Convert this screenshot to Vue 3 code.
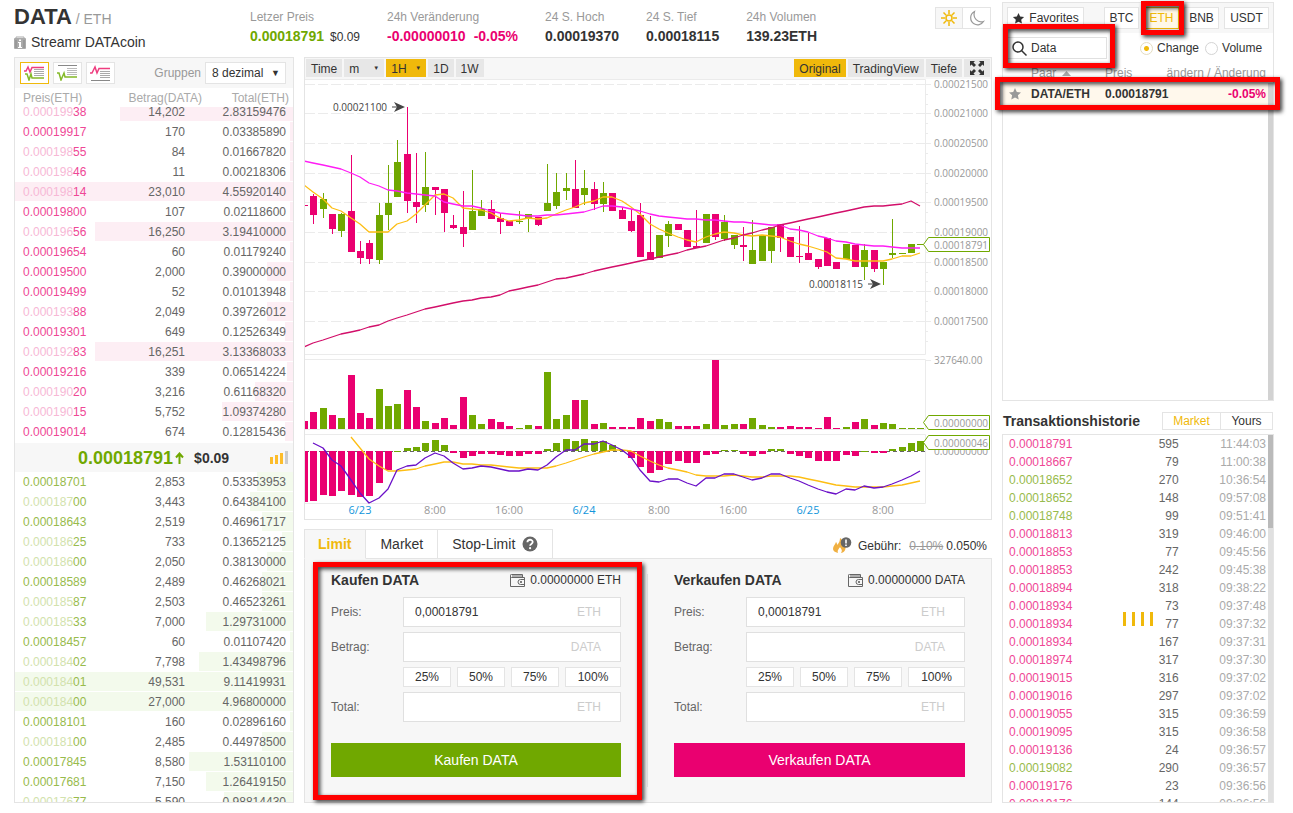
<script setup>
import { ref } from 'vue'

const search = ref('Data')
const sortBy = ref('change')

const stats = [
  { label: 'Letzer Preis', value: '0.00018791', tone: 'up', extra: '$0.09' },
  { label: '24h Veränderung', value: '-0.00000010', tone: 'down', second: '-0.05%' },
  { label: '24 S. Hoch', value: '0.00019370' },
  { label: '24 S. Tief', value: '0.00018115' },
  { label: '24h Volumen', value: '139.23ETH' },
]

// [price, amount, total, depth in px of a 278px row, faded prefix]
const book = (rows) =>
  rows.map(([price, amount, total, depth, faded]) => ({
    head: faded ? price.slice(0, 8) : '',
    tail: faded ? price.slice(8) : price,
    amount,
    total,
    depth: ((depth / 278) * 100).toFixed(2) + '%',
  }))

const asks = book([
  ['0.00019938', '14,202', '2.83159476', 173, 1],
  ['0.00019917', '170', '0.03385890', 3, 0],
  ['0.00019855', '84', '0.01667820', 3, 1],
  ['0.00019846', '11', '0.00218306', 3, 1],
  ['0.00019814', '23,010', '4.55920140', 278, 1],
  ['0.00019800', '107', '0.02118600', 3, 0],
  ['0.00019656', '16,250', '3.19410000', 198, 1],
  ['0.00019654', '60', '0.01179240', 3, 0],
  ['0.00019500', '2,000', '0.39000000', 26, 0],
  ['0.00019499', '52', '0.01013948', 3, 0],
  ['0.00019388', '2,049', '0.39726012', 26, 1],
  ['0.00019301', '649', '0.12526349', 8, 0],
  ['0.00019283', '16,251', '3.13368033', 198, 1],
  ['0.00019216', '339', '0.06514224', 6, 0],
  ['0.00019020', '3,216', '0.61168320', 38, 1],
  ['0.00019015', '5,752', '1.09374280', 71, 1],
  ['0.00019014', '674', '0.12815436', 8, 0],
])

const bids = book([
  ['0.00018701', '2,853', '0.53353953', 36, 0],
  ['0.00018700', '3,443', '0.64384100', 43, 1],
  ['0.00018643', '2,519', '0.46961717', 31, 0],
  ['0.00018625', '733', '0.13652125', 11, 1],
  ['0.00018600', '2,050', '0.38130000', 26, 1],
  ['0.00018589', '2,489', '0.46268021', 31, 0],
  ['0.00018587', '2,503', '0.46523261', 31, 1],
  ['0.00018533', '7,000', '1.29731000', 87, 1],
  ['0.00018457', '60', '0.01107420', 3, 0],
  ['0.00018402', '7,798', '1.43498796', 94, 1],
  ['0.00018401', '49,531', '9.11419931', 278, 1],
  ['0.00018400', '27,000', '4.96800000', 278, 1],
  ['0.00018101', '160', '0.02896160', 3, 0],
  ['0.00018100', '2,485', '0.44978500', 31, 1],
  ['0.00017845', '8,580', '1.53110100', 104, 0],
  ['0.00017681', '7,150', '1.26419150', 87, 0],
  ['0.00017677', '5,590', '0.98814430', 69, 1],
])

const history = [
  ['0.00018791', '595', '11:44:03', 'down'],
  ['0.00018667', '79', '11:00:38', 'down'],
  ['0.00018652', '270', '10:36:54', 'up'],
  ['0.00018652', '148', '09:57:08', 'up'],
  ['0.00018748', '99', '09:51:41', 'up'],
  ['0.00018813', '319', '09:46:00', 'down'],
  ['0.00018853', '77', '09:45:56', 'down'],
  ['0.00018853', '242', '09:45:38', 'down'],
  ['0.00018894', '318', '09:38:22', 'down'],
  ['0.00018934', '73', '09:37:48', 'down'],
  ['0.00018934', '77', '09:37:32', 'down'],
  ['0.00018934', '167', '09:37:31', 'down'],
  ['0.00018974', '317', '09:37:30', 'down'],
  ['0.00019015', '316', '09:37:02', 'down'],
  ['0.00019016', '297', '09:37:02', 'down'],
  ['0.00019055', '315', '09:36:59', 'down'],
  ['0.00019095', '315', '09:36:58', 'down'],
  ['0.00019136', '24', '09:36:57', 'down'],
  ['0.00019082', '290', '09:36:57', 'up'],
  ['0.00019176', '23', '09:36:56', 'down'],
  ['0.00019176', '144', '09:36:56', 'down'],
]

const forms = [
  { side: 'buy', title: 'Kaufen DATA', balance: '0.00000000 ETH', price: ref('0,00018791') },
  { side: 'sell', title: 'Verkaufen DATA', balance: '0.00000000 DATA', price: ref('0,00018791') },
]
const shares = ['25%', '50%', '75%', '100%']

// Chart series are kept in steps of a third of a chart unit, counted downwards.
const RED = '#ea0070'
const GREEN = '#70a800'
const centerX = (i) => Math.round(9.34 * i - 1)
const priceY = (t) => Math.round(t / 3) - 29
const lowerY = (t) => Math.round(t / 3) + 271

// [high, low, body top, body bottom, rising]
const candles = [
  [449, 488, 465, 468, 0], [433, 521, 438, 494, 0], [430, 505, 447, 476, 1], [492, 551, 492, 537, 0],
  [490, 560, 492, 542, 1], [316, 606, 483, 606, 0], [574, 641, 603, 624, 0], [571, 643, 579, 627, 0],
  [458, 643, 495, 629, 1], [346, 541, 459, 494, 1], [270, 441, 336, 441, 1], [172, 490, 312, 453, 0],
  [310, 518, 456, 471, 0], [307, 487, 411, 465, 1], [411, 494, 411, 420, 0], [417, 545, 417, 489, 0],
  [496, 536, 525, 534, 0], [424, 592, 531, 552, 0], [361, 540, 483, 540, 1], [450, 498, 477, 498, 1],
  [450, 508, 477, 507, 0], [490, 551, 504, 516, 0], [514, 528, 514, 528, 0], [484, 521, 513, 516, 1],
  [492, 545, 492, 504, 1], [500, 527, 500, 524, 0], [343, 483, 459, 483, 1], [370, 478, 426, 468, 1],
  [370, 449, 414, 423, 1], [331, 474, 417, 474, 0], [361, 464, 414, 435, 1], [396, 479, 417, 462, 0],
  [397, 485, 429, 462, 1], [429, 483, 429, 483, 0], [470, 508, 480, 507, 0], [478, 545, 513, 543, 0],
  [460, 621, 495, 621, 0], [498, 630, 606, 630, 0], [555, 624, 555, 624, 1], [513, 591, 522, 557, 1],
  [522, 540, 522, 540, 0], [540, 591, 540, 591, 0], [480, 595, 588, 594, 0], [492, 580, 492, 579, 1],
  [492, 570, 492, 561, 0], [495, 572, 516, 567, 1], [555, 597, 555, 585, 1], [531, 632, 585, 591, 0],
  [510, 642, 600, 642, 1], [555, 633, 555, 633, 1], [531, 639, 531, 603, 1], [522, 605, 522, 564, 0],
  [561, 621, 561, 621, 0], [528, 638, 618, 621, 0], [548, 630, 609, 630, 0], [627, 656, 627, 651, 0],
  [564, 648, 564, 648, 0], [636, 657, 636, 657, 0], [582, 627, 582, 627, 1], [585, 651, 585, 651, 0],
  [582, 690, 600, 651, 1], [600, 665, 600, 657, 0], [636, 704, 636, 657, 1], [508, 625, 609, 615, 1],
  [609, 612, 609, 612, 1], [582, 609, 582, 609, 1], [582, 585, 582, 585, 1],
].map(([high, low, top, bottom, rising], i) => ({
  x: centerX(i),
  high: priceY(high),
  wick: priceY(low) - priceY(high),
  top: priceY(top),
  body: Math.max(1, priceY(bottom) - priceY(top)),
  color: rising ? GREEN : RED,
}))

const volumes = [
  213, 186, 174, 195, 204, 75, 189, 204, 117, 168, 162, 120, 171, 213, 219, 204, 225, 141, 195, 222, 207, 216,
  228, 234, 225, 228, 66, 207, 195, 150, 150, 222, 219, 231, 231, 231, 204, 213, 207, 216, 228, 228, 228, 222,
  30, 225, 222, 222, 204, 225, 231, 231, 228, 231, 231, 234, 201, 234, 231, 216, 207, 225, 219, 222, 234, 234, 234,
].map((t, i) => ({ x: centerX(i), y: lowerY(t), h: 350 - lowerY(t), color: candles[i].color }))

const macdBars = [
  456, 453, 435, 438, 423, 435, 441, 438, 399, 360, 302, 294, 291, 279, 270, 285, 308, 324, 318, 312, 312, 315,
  318, 318, 312, 312, 297, 279, 267, 273, 267, 273, 273, 285, 300, 324, 351, 369, 360, 342, 333, 339, 339, 315,
  312, 300, 300, 312, 318, 312, 297, 297, 312, 318, 324, 333, 333, 333, 315, 318, 302, 308, 308, 297, 291, 279, 273,
].map((t, i) => {
  const end = lowerY(t)
  return { x: centerX(i), y: Math.min(end, 372), h: Math.max(1, Math.abs(end - 372)), color: t > 303 ? RED : GREEN }
})

const line = (values, y, first = 0) => values.map((v, i) => `${centerX(i + first)},${y(v)}`).join(' ')

const maSlow = line([
  892, 880, 871, 862, 853, 847, 841, 832, 826, 814, 805, 796, 787, 778, 772, 766, 760, 754, 751, 745, 740, 734,
  724, 718, 712, 706, 697, 688, 685, 679, 673, 664, 658, 652, 646, 640, 633, 628, 622, 616, 609, 601, 595, 588,
  579, 571, 563, 556, 550, 541, 535, 526, 520, 514, 508, 502, 496, 490, 484, 478, 472, 467, 467, 464, 461, 454, 469,
], priceY)
const maMid = line([
  334, 340, 346, 352, 358, 370, 382, 400, 409, 421, 424, 429, 433, 436, 439, 456, 462, 469, 469, 474, 484, 490,
  493, 495, 497, 499, 496, 495, 493, 490, 485, 478, 469, 469, 470, 477, 484, 493, 497, 502, 505, 506, 508, 509,
  511, 512, 515, 517, 520, 523, 524, 526, 536, 541, 547, 559, 565, 574, 577, 583, 586, 589, 589, 590, 595, 595, 595,
], priceY)
const maFast = line([
  406, 427, 447, 474, 484, 504, 523, 547, 547, 547, 521, 514, 493, 464, 436, 432, 445, 474, 478, 480, 490, 505,
  513, 511, 504, 507, 505, 493, 481, 472, 458, 454, 440, 440, 453, 470, 493, 522, 538, 550, 560, 570, 577, 560,
  551, 545, 549, 555, 559, 554, 557, 562, 572, 583, 589, 596, 606, 625, 628, 633, 632, 634, 632, 628, 619, 619, 610,
], priceY)
const macdLine = line([
  280, 295, 330, 348, 390, 428, 458, 443, 418, 361, 349, 346, 325, 310, 319, 338, 358, 355, 349, 352, 358, 364,
  364, 358, 361, 346, 322, 301, 301, 283, 283, 274, 284, 299, 322, 360, 394, 397, 388, 388, 400, 409, 385, 385,
  373, 373, 382, 391, 385, 373, 371, 385, 394, 406, 418, 427, 433, 418, 421, 409, 415, 412, 403, 391, 377, 364,
], lowerY, 1)
const signalLine = line([
  260, 295, 328, 348, 364, 364, 361, 358, 349, 343, 337, 337, 343, 343, 346, 346, 349, 352, 355, 355, 355, 355,
  349, 340, 331, 322, 313, 307, 301, 301, 304, 319, 332, 346, 355, 361, 367, 376, 379, 379, 379, 376, 379, 382,
  382, 379, 379, 379, 382, 388, 394, 400, 406, 409, 412, 412, 412, 411, 409, 406, 400, 394,
], lowerY, 5)

const priceTicks = [
  ['0.00021500', 5], ['0.00021000', 34], ['0.00020500', 64], ['0.00020000', 94], ['0.00019500', 123],
  ['0.00019000', 153], ['0.00018500', 183], ['0.00018000', 212], ['0.00017500', 242],
]
const minorTicks = [15, 25, 44, 54, 74, 84, 104, 113, 133, 143, 163, 173, 193, 202, 222, 232, 252, 262]
const timeTicks = [
  ['6/23', 55, 1], ['8:00', 130, 0], ['16:00', 204, 0], ['6/24', 279, 1],
  ['8:00', 354, 0], ['16:00', 428, 0], ['6/25', 503, 1], ['8:00', 578, 0],
]
const star = 'M7 1l1.800 3.900 4.200.5-3.100 2.900.8 4.200L7 10.400 3.300 12.500l.8-4.200L1 5.400l4.200-.5z'
</script>

<template>
  <div class="page">
    <div class="desk">
      <header class="top">
        <div class="pair">
          <h1>DATA<small> / ETH</small></h1>
          <p>
            <svg width="12" height="13" viewBox="0 0 12 13" aria-hidden="true">
              <path d="M2 2V1h8v1" fill="none" stroke="#aaa" />
              <rect y="2" width="12" height="11" rx="1" fill="#aaa" />
              <path d="M2 4v8M10 4v8" stroke="#888" />
              <path d="M5 3.500h2v1.500H5zM4 6h3v5h1v1H4v-1h1V7H4z" fill="#fff" />
            </svg>
            Streamr DATAcoin
          </p>
        </div>
        <dl class="stats">
          <div v-for="s in stats" :key="s.label">
            <dt>{{ s.label }}</dt>
            <dd :class="s.tone">
              {{ s.value }}<span v-if="s.extra" class="fiat">{{ s.extra }}</span><span v-if="s.second" class="second">{{ s.second }}</span>
            </dd>
          </div>
        </dl>
        <div class="theme">
          <button type="button" class="on" aria-label="Hell">
            <svg width="16" height="16" viewBox="0 0 16 16" fill="none" stroke="#f0b90b" stroke-width="1.500" aria-hidden="true">
              <circle cx="8" cy="8" r="3" />
              <path d="M8 0v4M8 12v4M0 8h4M12 8h4M2.500 2.500l2.700 2.700M10.800 10.800l2.700 2.700M2.500 13.500l2.700-2.700M10.800 5.200l2.700-2.700" />
            </svg>
          </button>
          <button type="button" aria-label="Dunkel">
            <svg width="16" height="16" viewBox="0 0 16 16" fill="none" stroke="#999" stroke-width="1.200" aria-hidden="true">
              <path d="M5.500 1.500C.5 4 .5 11 5 13.800c3.300 2 7.500 1 9.500-2.300C9 13.500 3.500 8 5.500 1.500z" />
            </svg>
          </button>
        </div>
      </header>

      <main class="trading">
        <section class="book">
          <div class="book-bar">
            <button type="button" class="view on" aria-label="Alle Orders">
              <svg width="21" height="16" viewBox="0 0 21 16" fill="none" aria-hidden="true">
                <path d="M10 4.500h10M10 6.500h10M10 8.500h10M10 10.500h10" stroke="#aaa" />
                <path d="M0 6h2l2-4 2 5 2-4.500h12" stroke="#ee3d7f" stroke-width="1.500" />
                <path d="M1 9h2l2 6 2-6 1 4h12" stroke="#84b929" stroke-width="1.500" />
              </svg>
            </button>
            <button type="button" class="view" aria-label="Kauforders">
              <svg width="21" height="16" viewBox="0 0 21 16" fill="none" aria-hidden="true">
                <path d="M1 .5h19" stroke="#888" />
                <path d="M10 3.500h10M10 5.500h10M10 7.500h10M10 9.500h10" stroke="#bbb" />
                <path d="M0 8h2l2 7 3-7 1 4h12" stroke="#84b929" stroke-width="1.500" />
              </svg>
            </button>
            <button type="button" class="view" aria-label="Verkaufsorders">
              <svg width="21" height="16" viewBox="0 0 21 16" fill="none" aria-hidden="true">
                <path d="M1 15.500h19" stroke="#888" />
                <path d="M10 6.500h10M10 8.500h10M10 10.500h10M10 12.500h10" stroke="#aaa" />
                <path d="M0 8h2l3-6 2 6 2-4.500h11" stroke="#ee3d7f" stroke-width="1.500" />
              </svg>
            </button>
            <label for="groups">Gruppen</label>
            <div class="select">
              <select id="groups"><option>8 dezimal</option></select>
              <span class="caret" aria-hidden="true">▼</span>
            </div>
          </div>
          <div class="book-head"><span>Preis(ETH)</span><span>Betrag(DATA)</span><span>Total(ETH)</span></div>
          <div class="asks">
            <table aria-label="Verkaufsorders">
              <tbody>
                <tr v-for="r in asks" :key="r.head + r.tail" :style="{ '--depth': r.depth }">
                  <td class="down"><i>{{ r.head }}</i><b>{{ r.tail }}</b></td>
                  <td>{{ r.amount }}</td>
                  <td>{{ r.total }}</td>
                </tr>
              </tbody>
            </table>
          </div>
          <div class="last">
            <strong>0.00018791</strong>
            <svg class="arrow" width="9" height="12" viewBox="0 0 9 12" aria-hidden="true">
              <path d="M4.500 12V2M1 5.500l3.500-4 3.500 4" fill="none" stroke="#70a800" stroke-width="2" />
            </svg>
            <em>$0.09</em>
            <svg class="signal" width="18" height="13" viewBox="0 0 18 13" aria-hidden="true">
              <path d="M0 6h3v7H0zM5 4h3v9H5zM10 2h3v11h-3z" fill="#fdbd2a" />
              <path d="M15 0h3v13h-3z" fill="#ccc" />
            </svg>
          </div>
          <div class="bids">
            <table aria-label="Kauforders">
              <tbody>
                <tr v-for="r in bids" :key="r.head + r.tail" :style="{ '--depth': r.depth }">
                  <td class="up"><i>{{ r.head }}</i><b>{{ r.tail }}</b></td>
                  <td>{{ r.amount }}</td>
                  <td>{{ r.total }}</td>
                </tr>
              </tbody>
            </table>
          </div>
        </section>

        <div class="center">
          <section class="chart">
            <div class="chart-bar">
              <button type="button">Time</button>
              <div class="drop">
                <select aria-label="Minuten"><option>m</option></select>
                <span aria-hidden="true">▼</span>
              </div>
              <div class="drop on">
                <select aria-label="Stunden"><option>1H</option></select>
                <span aria-hidden="true">▼</span>
              </div>
              <button type="button">1D</button>
              <button type="button">1W</button>
              <button type="button" class="on push">Original</button>
              <button type="button">TradingView</button>
              <button type="button">Tiefe</button>
              <button type="button" aria-label="Vollbild">
                <svg width="14" height="14" viewBox="0 0 14 14" aria-hidden="true">
                  <path d="M0 0h5L3.500 1.500 6 4 4 6 1.500 3.500 0 5zM14 0v5l-1.500-1.500L10 6 8 4l2.500-2.500L9 0zM0 14V9l1.500 1.500L4 8l2 2-2.500 2.500L5 14zM14 14H9l1.500-1.500L8 10l2-2 2.500 2.500L14 9z" fill="#333" />
                </svg>
              </button>
            </div>
            <svg class="plot" viewBox="0 0 686 440" role="img" aria-label="Kursverlauf DATA/ETH">
              <g fill="none" stroke="#ebebeb">
                <path d="M0 .5h620.500v275H0M0 280.500h620.500v70H0M0 355.500h620.500v69H0" />
                <path v-for="t in priceTicks" :key="t[1]" :d="`M0 ${t[1] + 0.5}h620`" stroke-dasharray="10 3" />
                <path v-for="t in priceTicks" :key="'t' + t[1]" :d="`M621 ${t[1] + 0.5}h5`" />
                <path v-for="t in minorTicks" :key="'m' + t" :d="`M621 ${t + 0.5}h2`" />
                <path d="M621 281.500h5" />
              </g>
              <path d="M0 372.500h620" stroke="#666" stroke-dasharray="4 3" />
              <rect v-for="(b, i) in volumes" :key="'v' + i" :x="b.x - 3" :y="b.y" width="7" :height="b.h" :fill="b.color" />
              <rect v-for="(b, i) in macdBars" :key="'b' + i" :x="b.x - 3" :y="b.y" width="7" :height="b.h" :fill="b.color" />
              <g v-for="(c, i) in candles" :key="'c' + i" :fill="c.color">
                <rect :x="c.x" :y="c.high" width="1" :height="c.wick" />
                <rect :x="c.x - 3" :y="c.top" width="7" :height="c.body" />
              </g>
              <g fill="none" stroke-width="1.300" stroke-linejoin="round">
                <polyline :points="maFast" stroke="#fdbe14" />
                <polyline :points="maMid" stroke="#ff1df5" />
                <polyline :points="maSlow" stroke="#d20f6a" />
                <polyline :points="signalLine" stroke="#fdbe14" />
                <polyline :points="macdLine" stroke="#6a0fc8" />
              </g>
              <g class="note">
                <text x="28" y="32">0.00021100</text>
                <path d="M87 28h8" />
                <path d="M89 23l11 5-11 5 3-5z" class="tip" />
                <text x="504" y="209">0.00018115</text>
                <path d="M563 205h8" />
                <path d="M565 200l11 5-11 5 3-5z" class="tip" />
              </g>
              <g class="axis">
                <text v-for="t in priceTicks" :key="'l' + t[1]" x="629" :y="t[1] + 4">{{ t[0] }}</text>
                <text x="629" y="285">327640.00</text>
                <text x="629" y="376">0.00000000</text>
              </g>
              <g fill="#fff" stroke="#70a800">
                <path d="M618.500 165.500l5-7h61v14h-61z" />
                <path d="M618.500 343.500l5-7h61v14h-61z" />
                <path d="M618.500 363.500l5-7h61v14h-61z" />
              </g>
              <g class="axis">
                <text x="629" y="170">0.00018791</text>
                <text x="629" y="348">0.00000000</text>
                <text x="629" y="368">0.00000046</text>
              </g>
              <g class="times">
                <text v-for="t in timeTicks" :key="t[1]" :x="t[1]" y="435" :class="{ day: t[2] }">{{ t[0] }}</text>
              </g>
            </svg>
          </section>

          <section class="order">
            <div class="tabs">
              <button type="button" class="on">Limit</button>
              <button type="button">Market</button>
              <button type="button">
                Stop-Limit
                <svg width="16" height="16" viewBox="0 0 16 16" aria-hidden="true">
                  <circle cx="8" cy="8" r="7.500" fill="#666" />
                  <path d="M5.400 6.300c0-3.400 5.300-3.300 5.300-.2C10.700 8 8.100 8 8.100 9.800" fill="none" stroke="#fff" stroke-width="1.800" />
                  <circle cx="8.100" cy="12.200" r="1.100" fill="#fff" />
                </svg>
              </button>
              <p class="fee">
                <svg width="20" height="17" viewBox="0 0 20 17" aria-hidden="true">
                  <path d="M1 12c0-3 2-4 3-7 1 1 1 2 1 3 2-2 3-4 3-7 4 3 4 6 3 8l2-2c2 5-1 9-4 9 2-3 0-4-1-6-1 2-3 3-2 6-3-1-5-2-5-4z" fill="#f0b042" />
                  <circle cx="14" cy="5.500" r="5.300" fill="#666" />
                  <path d="M14 2.500v4M14 7.500v1.500" stroke="#fff" stroke-width="1.600" />
                </svg>
                <span>Gebühr:</span><s>0.10%</s><span>0.050%</span>
              </p>
            </div>
            <div class="panel">
              <form v-for="f in forms" :key="f.side" :class="f.side" @submit.prevent>
                <div class="form-head">
                  <h2>{{ f.title }}</h2>
                  <span>
                    <svg width="16" height="13" viewBox="0 0 16 13" fill="none" stroke="#666" aria-hidden="true">
                      <path d="M12.500 3.500v-3h-11a1 1 0 0 0 0 3h13v9h-14v-11M15 5.500h-4.500a2 2 0 0 0 0 5H15M2 2h10" />
                      <circle cx="11" cy="8" r=".7" fill="#666" />
                    </svg>
                    {{ f.balance }}
                  </span>
                </div>
                <div class="field">
                  <label :for="f.side + '-price'">Preis:</label>
                  <div class="box"><input :id="f.side + '-price'" v-model="f.price.value" type="text" /><span>ETH</span></div>
                </div>
                <div class="field">
                  <label :for="f.side + '-amount'">Betrag:</label>
                  <div class="box"><input :id="f.side + '-amount'" type="text" /><span>DATA</span></div>
                </div>
                <div class="shares">
                  <button v-for="s in shares" :key="s" type="button">{{ s }}</button>
                </div>
                <div class="field">
                  <label :for="f.side + '-total'">Total:</label>
                  <div class="box"><input :id="f.side + '-total'" type="text" /><span>ETH</span></div>
                </div>
                <button class="submit" type="submit">{{ f.title }}</button>
                <span v-if="f.side === 'buy'" class="mark mark-form"></span>
              </form>
            </div>
          </section>
        </div>
      </main>
    </div>

    <aside class="side">
      <section class="markets">
        <div class="market-bar">
          <button type="button" class="fav">
            <svg width="13" height="13" viewBox="0 0 14 14" aria-hidden="true"><path :d="star" fill="#333" /></svg>
            Favorites
          </button>
          <button type="button" class="push">BTC</button>
          <div class="marked"><button type="button" class="on">ETH</button><span class="mark mark-tab"></span></div>
          <button type="button">BNB</button>
          <button type="button" class="wide">USDT</button>
        </div>
        <div class="filter">
          <div class="search">
            <svg width="15" height="15" viewBox="0 0 15 15" fill="none" stroke="#333" stroke-width="1.500" aria-hidden="true">
              <circle cx="6" cy="6" r="5" /><path d="M9.500 9.500l5 5" />
            </svg>
            <input v-model="search" type="text" aria-label="Suche" />
            <span class="mark mark-search"></span>
          </div>
          <label class="radio"><input v-model="sortBy" type="radio" name="sort" value="change" />Change</label>
          <label class="radio"><input v-model="sortBy" type="radio" name="sort" value="volume" />Volume</label>
        </div>
        <div class="pairs">
          <table>
            <thead>
              <tr>
                <th></th>
                <th>Paar <svg width="9" height="5" viewBox="0 0 9 5" aria-hidden="true"><path d="M0 5L4.500 0 9 5z" fill="#aaa" /></svg></th>
                <th>Preis</th>
                <th>ändern / Änderung</th>
              </tr>
            </thead>
            <tbody>
              <tr>
                <td>
                  <svg width="14" height="14" viewBox="0 0 14 14" aria-hidden="true"><path :d="star" fill="#999" /></svg>
                  <span class="mark mark-row"></span>
                </td>
                <td>DATA/ETH</td>
                <td>0.00018791</td>
                <td class="down">-0.05%</td>
              </tr>
            </tbody>
          </table>
          <span class="bar"></span>
        </div>
      </section>

      <div class="history-head">
        <h2>Transaktionshistorie</h2>
        <div><button type="button" class="on">Market</button><button type="button">Yours</button></div>
      </div>
      <section class="history">
        <table aria-label="Transaktionen">
          <tbody>
            <tr v-for="(h, i) in history" :key="i">
              <td :class="h[3]">{{ h[0] }}</td>
              <td>{{ h[1] }}</td>
              <td>{{ h[2] }}</td>
            </tr>
          </tbody>
        </table>
        <span class="track"><span class="thumb"></span></span>
        <div class="loader" aria-hidden="true"><i></i><i></i><i></i><i></i></div>
      </section>
    </aside>
  </div>
</template>

<style>
body { background: #fff; overflow: hidden; }
</style>

<style scoped>
* { box-sizing: border-box; }
.page {
  display: grid;
  grid-template-columns: minmax(0, 1fr) 272px;
  gap: 10px;
  height: 100vh;
  padding: 0 19px 10px 14px;
  font: 12px/20px "Liberation Sans", Arial, sans-serif;
  color: #333;
}
h1, h2, p, dl, dd, table { margin: 0; }
button, select, input { font: inherit; color: inherit; margin: 0; border-radius: 0; }
button { padding: 0; border: 1px solid #e4e4e4; background: #fff; cursor: pointer; }
svg { display: block; flex: none; }
table { width: 100%; border-collapse: collapse; table-layout: fixed; }
td, th { padding: 0; font-weight: normal; text-align: right; white-space: nowrap; }
select { appearance: none; border: 0; background: transparent; width: 100%; height: 100%; outline: 0; }
.up { color: #70a800; }
.down { color: #ea0070; }
.push { margin-left: auto; }

.desk, .side, .center, .book, .order { display: flex; flex-direction: column; min-width: 0; min-height: 0; }
.top { display: flex; align-items: flex-start; flex: none; height: 57px; }
.pair { width: 236px; padding-top: 4px; }
.pair h1 { font-size: 22px; line-height: 26px; }
.pair small { font-size: 14px; font-weight: normal; color: #999; }
.pair p { display: flex; align-items: center; gap: 5px; font-size: 14px; line-height: 20px; }
.stats { display: flex; gap: 27px; padding-top: 7px; white-space: nowrap; }
.stats dt { color: #999; }
.stats dd { font-size: 14px; line-height: 19px; font-weight: bold; }
.fiat { margin-left: 6px; font-size: 12px; color: #333; font-weight: normal; }
.second { margin-left: 8px; }
.theme { display: flex; margin: 7px 1px 0 auto; border: 1px solid #e4e4e4; }
.theme button { display: grid; place-items: center; width: 27px; height: 20px; border: 0; }
.theme .on { background: #f7f7f7; border-right: 1px solid #e4e4e4; }

.trading { flex: 1; min-height: 0; display: grid; grid-template-columns: 280px minmax(0, 1fr); gap: 10px; }
.book { border: 1px solid #e4e4e4; overflow: hidden; }
.book-bar { flex: none; display: flex; align-items: center; gap: 4px; height: 30px; padding: 0 7px 0 5px; background: #f7f7f7; color: #999; }
.view { display: grid; place-items: center; width: 29px; height: 22px; }
.view.on { border-color: #f0b90b; }
.book-bar label { margin-left: auto; }
.select { position: relative; width: 81px; height: 22px; border: 1px solid #e4e4e4; background: #fff; color: #333; }
.select select { padding: 0 6px; }
.select .caret { position: absolute; right: 5px; top: 0; font-size: 9px; pointer-events: none; }
.book-head { flex: none; display: grid; grid-template-columns: 80px 99px 87px; height: 19px; padding-left: 8px; color: #aaa; text-align: right; }
.book-head span:first-child { text-align: left; }
.asks { flex: none; height: 336px; display: flex; flex-direction: column; justify-content: flex-end; overflow: hidden; padding-bottom: 1px; }
.bids { flex: 1; min-height: 0; overflow: hidden; }
.asks tr, .bids tr {
  height: 20px;
  background: linear-gradient(to left, var(--tint) var(--depth), transparent var(--depth)) 0 0 / 100% 19px no-repeat;
}
.asks tr { --tint: #fdeef4; }
.bids tr { --tint: #f3faec; }
.book td { color: #666; }
.book td:first-child { width: 80px; padding-left: 8px; text-align: left; }
.book td:nth-child(2) { width: 90px; }
.book td:last-child { padding-right: 7px; }
.book td i, .book td b { font-style: normal; font-weight: normal; }
.book .down i { color: #f7b8d6; }
.book .down b { color: #ef4796; }
.book .up i { color: #d2e2ad; }
.book .up b { color: #98bb4c; }
.last { flex: none; display: flex; align-items: center; height: 29px; padding: 0 5px 0 63px; background: #f7f7f7; }
.last strong { font-size: 18px; color: #70a800; }
.last .arrow { margin-left: 2px; }
.last em { margin-left: 10px; font-size: 14px; font-style: normal; font-weight: bold; }
.signal { margin-left: auto; }

.center { gap: 9px; }
.chart { flex: none; border: 1px solid #e4e4e4; }
.chart-bar { display: flex; gap: 2px; height: 21px; padding: 1px; background: #f7f7f7; }
.chart-bar button { height: 18px; padding: 0 5px; border: 0; background: #e7e7e7; }
.chart-bar .on { background: #f0b90b; }
.chart-bar button svg { margin: 0 1px; }
.drop { position: relative; width: 40px; height: 18px; background: #e7e7e7; }
.drop select { padding: 0 5px; }
.drop span { position: absolute; right: 5px; top: -1px; font-size: 6px; pointer-events: none; }
.plot { width: 100%; height: auto; font-family: "Open Sans", "Noto Sans", sans-serif; }
.axis text { font-size: 10px; fill: #999; }
.note text { font-size: 10px; fill: #444; }
.note path { stroke: #444; fill: none; }
.note .tip { fill: #444; stroke: none; }
.times text { font-size: 11px; fill: #999; text-anchor: middle; }
.times .day { fill: #1296db; }

.order { flex: 1; }
.tabs { position: relative; z-index: 1; flex: none; display: flex; height: 30px; margin-bottom: -1px; font-size: 14px; }
.tabs button { display: flex; align-items: center; gap: 7px; padding: 0 14px; border-left: 0; background: #fff; }
.tabs button:first-child { padding-left: 13px; border-left: 1px solid #e4e4e4; }
.tabs .on { color: #f0b90b; font-weight: bold; background: #f7f7f7; border-bottom-color: #f7f7f7; }
.fee { display: flex; align-items: center; gap: 3px; margin: 3px 5px 0 auto; font-size: 12px; }
.fee svg { margin-right: 3px; }
.fee s { margin-left: 5px; color: #999; }
.panel { flex: 1; display: grid; grid-template-columns: 1fr 1fr; border: 1px solid #e4e4e4; background: #f7f7f7; }
form { position: relative; padding: 11px 26px 0; }
.buy { padding-right: 27px; }
.buy::after { content: ""; position: absolute; right: 0; top: 15px; bottom: 15px; border-right: 1px solid #e4e4e4; }
.form-head { display: flex; justify-content: space-between; height: 20px; margin-bottom: 7px; }
.form-head h2 { font-size: 14px; }
.form-head span { display: flex; align-items: center; gap: 4px; }
.field { display: flex; align-items: center; margin-bottom: 5px; }
.field label { width: 72px; color: #666; }
.box { position: relative; flex: 1; height: 30px; }
.box input { width: 100%; height: 100%; padding: 0 60px 0 11px; border: 1px solid #e0e0e0; background: #fff; outline: 0; }
.box span { position: absolute; right: 20px; top: 5px; color: #ccc; }
.shares { display: grid; grid-template-columns: 48px 48px 48px 1fr; gap: 6px; margin: 0 0 5px 72px; }
.shares button { height: 20px; line-height: 18px; }
.submit { width: 100%; height: 34px; margin-top: 16px; border: 0; color: #fff; font-size: 14px; }
.buy .submit { background: #70a800; }
.sell .submit { background: #ea0070; }

.side { padding-top: 2px; }
.markets { flex: none; display: flex; flex-direction: column; height: 399px; border: 1px solid #e4e4e4; }
.market-bar { display: flex; align-items: center; gap: 5px; height: 30px; padding: 0 4px; background: #f7f7f7; }
.market-bar button { height: 22px; min-width: 35px; }
.market-bar .fav { display: flex; align-items: center; justify-content: center; gap: 4px; width: 77px; }
.market-bar .wide { width: 45px; }
.market-bar .on { color: #f0b90b; border-color: #f0b90b; background: #fff8e7; }
.marked { position: relative; }
.filter { display: flex; align-items: center; height: 30px; padding-left: 4px; }
.search { position: relative; width: 100px; height: 22px; margin-right: 33px; border: 1px solid #e0e0e0; }
.search svg { position: absolute; left: 4px; top: 3px; }
.search input { width: 100%; height: 100%; padding: 0 4px 0 23px; border: 0; background: transparent; outline: 0; }
.radio { display: flex; align-items: center; gap: 4px; margin-right: 6px; }
.radio input { appearance: none; width: 13px; height: 13px; border: 1px solid #d4d4d4; border-radius: 50%; }
.radio input:checked { background: radial-gradient(circle, #f0b90b 2px, #fff 3px); border-color: #e4dcc0; }
.pairs { display: flex; flex: 1; }
.pairs table { flex: 1; height: fit-content; }
.pairs th { height: 20px; color: #999; }
.pairs td { height: 22px; font-weight: bold; background: #fff8ec; }
.pairs tbody tr { position: relative; }
.pairs th:nth-child(-n + 3), .pairs td:nth-child(-n + 3) { text-align: left; }
.pairs th:first-child { width: 28px; }
.pairs td:first-child { padding-left: 5px; }
.pairs th:nth-child(2) { width: 74px; }
.pairs th:nth-child(3) { width: 52px; }
.pairs th:last-child, .pairs td:last-child { padding-right: 2px; }
.pairs th svg { display: inline; vertical-align: 1px; margin-left: 2px; }
.bar { width: 5px; margin-top: 20px; background: #d2d2d2; }

.history-head { flex: none; display: flex; justify-content: space-between; align-items: center; height: 33px; padding: 6px 1px 0; }
.history-head h2 { font-size: 14px; }
.history-head div { display: flex; }
.history-head button { height: 18px; line-height: 16px; width: 53px; }
.history-head .on { width: 58px; color: #f0b90b; border-right: 0; }
.history { position: relative; flex: 1; display: flex; align-items: flex-start; min-height: 0; border: 1px solid #e4e4e4; overflow: hidden; }
.history td { height: 18px; line-height: 18px; color: #666; }
.history td:first-child { padding-left: 6px; text-align: left; }
.history td:nth-child(2) { padding-right: 1px; }
.history td:last-child { padding-right: 2px; color: #aaa; }
.history td.down { color: #ef4796; }
.history td.up { color: #98bb4c; }
.track { flex: none; width: 5px; align-self: stretch; background: #e0e0e0; }
.thumb { display: block; height: 93px; background: #bababa; }
.loader { position: absolute; inset: 0; display: flex; align-items: center; justify-content: center; gap: 6px; }
.loader i { width: 3px; height: 14px; background: #f0b90b; }

/* red call-outs laid over the highlighted controls */
.mark { position: absolute; z-index: 5; border: 5px solid #f00; filter: drop-shadow(2px 2px 2px rgba(0, 0, 0, 0.8)); pointer-events: none; }
.mark-tab { inset: -6px -5px -6px -3px; }
.mark-search { inset: -14px -9px -10px -5px; }
.mark-row { inset: -6px -12px -5px -8px; }
.mark-form { inset: 3px 6px 2px 8px; }
</style>
